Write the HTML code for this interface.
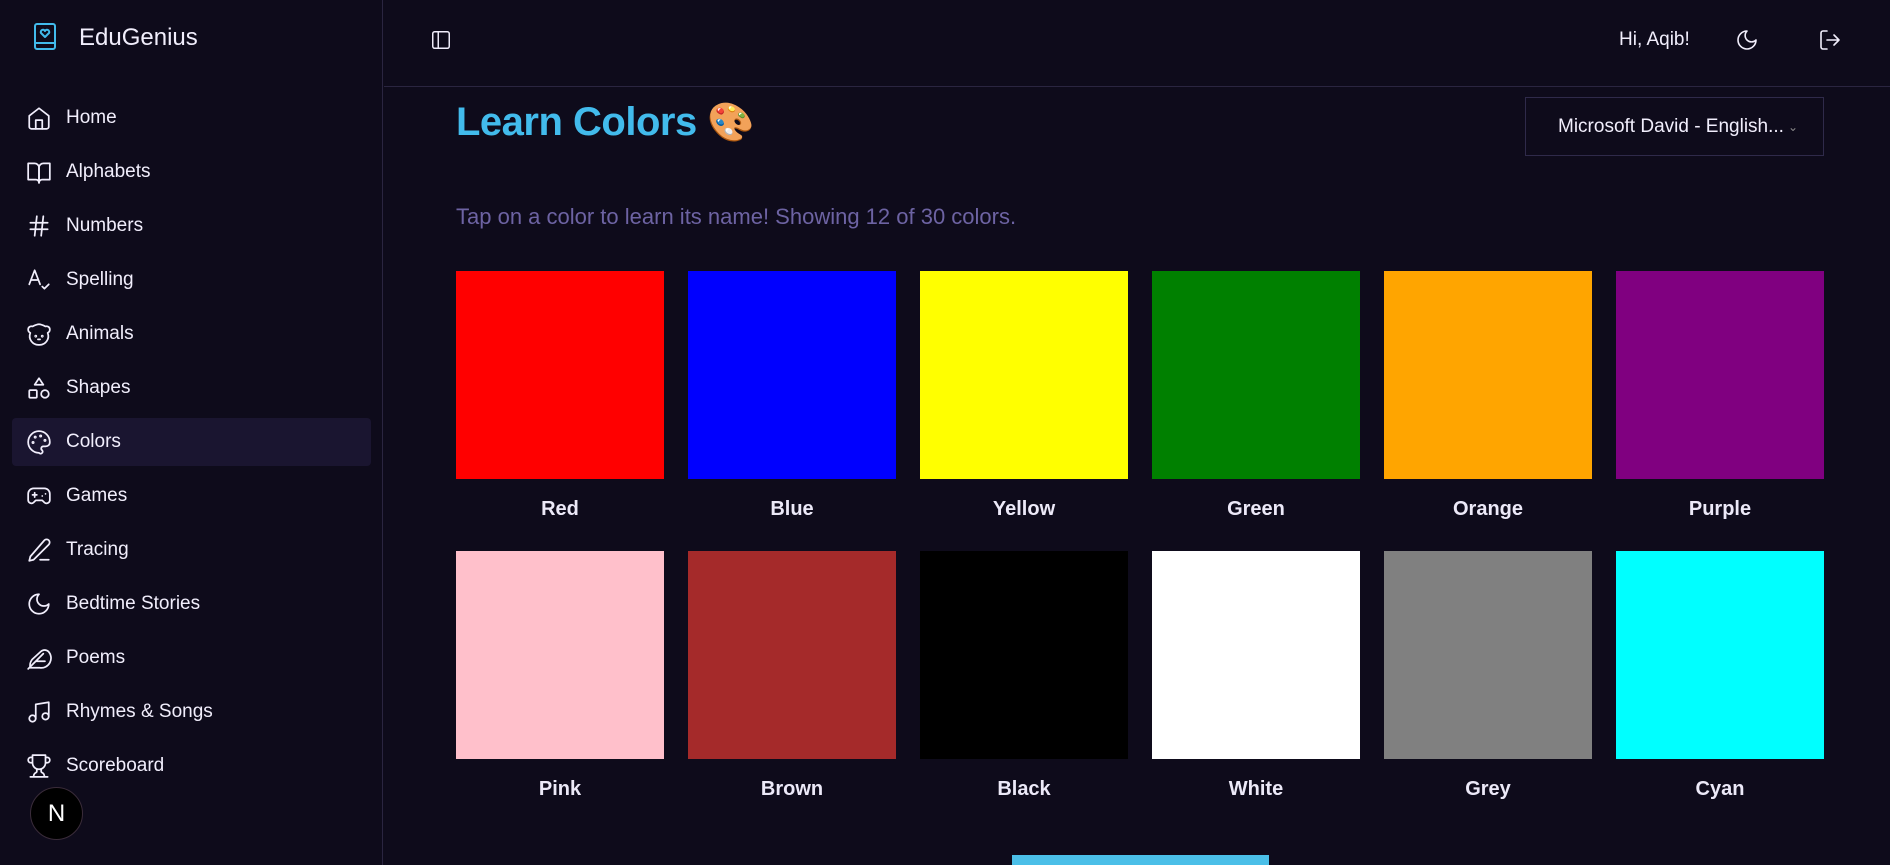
<!DOCTYPE html>
<html><head><meta charset="utf-8"><style>
*{box-sizing:border-box;margin:0;padding:0}
body{width:1890px;height:865px;background:#0e0b1b;font-family:"Liberation Sans",sans-serif;color:#f1eefc;overflow:hidden;position:relative}
.side{position:absolute;left:0;top:0;width:383px;height:865px;border-right:1px solid #2a2540}
.logo{position:absolute;left:34px;top:23px;display:flex;align-items:center}
.logo span{position:absolute;left:45px;top:1px;font-size:24px;white-space:nowrap;line-height:28px}
.nav{position:absolute;left:12px;width:359px;height:48px;display:flex;align-items:center;font-size:19px;border-radius:4px}
.nav svg{position:absolute;left:14px;width:26px;height:26px}
.nav span{position:absolute;left:54px}
.nav.act{background:#1a1530}
svg{fill:none;stroke:#f1eefc;stroke-width:1.6;stroke-linecap:round;stroke-linejoin:round}
.hdr{position:absolute;left:384px;top:0;right:0;height:87px;border-bottom:1px solid #2a2540}
h1{position:absolute;left:456px;top:100px;font-size:40px;color:#42bbec;font-weight:bold;letter-spacing:-0.5px}
.sub{position:absolute;left:456px;top:204px;font-size:22px;color:#6d63a3}
.dd{position:absolute;left:1525px;top:97px;width:299px;height:59px;border:1px solid #2f2a4a;font-size:19px;display:flex;align-items:center;padding-left:32px}
.sw{position:absolute;width:208px;height:208px}
.lb{position:absolute;width:208px;text-align:center;font-size:20px;font-weight:bold;color:#ece9f8}
</style></head><body>
<div class="side">
<div class="logo"><svg width="22" height="27" viewBox="0 0 22 27" style="stroke:#42bbec;stroke-width:2"><rect x="1" y="1" width="20" height="25" rx="2"/><line x1="1" y1="20" x2="21" y2="20"/><path d="M11 14l-4-4a2.2 2.2 0 0 1 4-2 2.2 2.2 0 0 1 4 2z"/></svg><span>EduGenius</span></div>
<div class="nav" style="top:94px"><svg viewBox="0 0 24 24"><path d="M3 10l9-7 9 7v10a2 2 0 0 1-2 2H5a2 2 0 0 1-2-2z"/><path d="M9 22v-8h6v8"/></svg><span>Home</span></div>
<div class="nav" style="top:148px"><svg viewBox="0 0 24 24"><path d="M2 4h6a4 4 0 0 1 4 4v14a3 3 0 0 0-3-3H2z"/><path d="M22 4h-6a4 4 0 0 0-4 4v14a3 3 0 0 1 3-3h7z"/></svg><span>Alphabets</span></div>
<div class="nav" style="top:202px"><svg viewBox="0 0 24 24"><path d="M4 9h16M4 15h16M10 3L8 21M16 3l-2 18"/></svg><span>Numbers</span></div>
<div class="nav" style="top:256px"><svg viewBox="0 0 24 24"><path d="M3 16l5-13 5 13M4.5 12h7M15 18l2 2 4-4"/></svg><span>Spelling</span></div>
<div class="nav" style="top:310px"><svg viewBox="0 0 24 24"><path d="M6 5a3 3 0 0 0-4 3c0 2 2 3 2 3a8 8 0 0 0 8 11 8 8 0 0 0 8-11s2-1 2-3a3 3 0 0 0-4-3C16 4 14 3 12 3S8 4 6 5z"/><circle cx="9" cy="14" r=".5"/><circle cx="15" cy="14" r=".5"/><path d="M11 17h2"/></svg><span>Animals</span></div>
<div class="nav" style="top:364px"><svg viewBox="0 0 24 24"><path d="M12 3l4 6H8z"/><rect x="3" y="14" width="7" height="7" rx="1"/><circle cx="17.5" cy="17.5" r="3.5"/></svg><span>Shapes</span></div>
<div class="nav act" style="top:418px"><svg viewBox="0 0 24 24"><path d="M12 22a10 10 0 1 1 10-10c0 3-2 4-4 4h-2a2 2 0 0 0-1 3.7A1.5 1.5 0 0 1 12 22z"/><circle cx="13.5" cy="6.5" r=".6"/><circle cx="17.5" cy="10.5" r=".6"/><circle cx="8.5" cy="7.5" r=".6"/><circle cx="6.5" cy="12.5" r=".6"/></svg><span>Colors</span></div>
<div class="nav" style="top:472px"><svg viewBox="0 0 24 24"><path d="M6 11h4M8 9v4M15 12h.01M18 10h.01"/><path d="M17 5H7a5 5 0 0 0-5 5v6a3 3 0 0 0 5 2l2-2h6l2 2a3 3 0 0 0 5-2v-6a5 5 0 0 0-5-5z"/></svg><span>Games</span></div>
<div class="nav" style="top:526px"><svg viewBox="0 0 24 24"><path d="M13 21h8"/><path d="M17 3a2.8 2.8 0 0 1 4 4L7 21l-4 1 1-4z"/></svg><span>Tracing</span></div>
<div class="nav" style="top:580px"><svg viewBox="0 0 24 24"><path d="M12 3a6 6 0 0 0 9 9 9 9 0 1 1-9-9z"/></svg><span>Bedtime Stories</span></div>
<div class="nav" style="top:634px"><svg viewBox="0 0 24 24"><path d="M12.7 21a9 9 0 0 0 8-15 5 5 0 0 0-7 0L6 13a9 9 0 0 0-2 8z"/><path d="M16 8L2 22M17.5 15H9"/></svg><span>Poems</span></div>
<div class="nav" style="top:688px"><svg viewBox="0 0 24 24"><path d="M9 18V5l12-2v13"/><circle cx="6" cy="18" r="3"/><circle cx="18" cy="16" r="3"/></svg><span>Rhymes &amp; Songs</span></div>
<div class="nav" style="top:742px"><svg viewBox="0 0 24 24"><path d="M6 9H4.5a2.5 2.5 0 0 1 0-5H6M18 9h1.5a2.5 2.5 0 0 0 0-5H18M4 22h16M10 14.7V17c0 .6-.5 1-1 1.2C7.8 18.8 7 20.2 7 22M14 14.7V17c0 .6.5 1 1 1.2 1.2.5 2 2 2 3.8M18 2H6v7a6 6 0 0 0 12 0z"/></svg><span>Scoreboard</span></div>
<div style="position:absolute;left:30px;top:787px;width:53px;height:53px;border-radius:50%;background:#000;border:1px solid #3a2c3a;color:#fff;font-size:24px;display:flex;align-items:center;justify-content:center">N</div>
</div>
<div class="hdr">
<svg style="position:absolute;left:46px;top:29px" width="22" height="22" viewBox="0 0 24 24"><rect x="3" y="3" width="18" height="18" rx="2"/><path d="M9 3v18"/></svg>
<span style="position:absolute;left:1235px;top:29px;font-size:19px">Hi, Aqib!</span>
<svg style="position:absolute;left:1351px;top:28px" width="24" height="24" viewBox="0 0 24 24"><path d="M12 3a6 6 0 0 0 9 9 9 9 0 1 1-9-9z"/></svg>
<svg style="position:absolute;left:1434px;top:28px" width="24" height="24" viewBox="0 0 24 24"><path d="M9 21H5a2 2 0 0 1-2-2V5a2 2 0 0 1 2-2h4M16 17l5-5-5-5M21 12H9"/></svg>
</div>
<h1>Learn Colors <span style="font-size:38px;font-family:'Noto Color Emoji',sans-serif">🎨</span></h1>
<div class="sub">Tap on a color to learn its name! Showing 12 of 30 colors.</div>
<div class="dd">Microsoft David - English...<span style="font-size:12px;color:#888;margin-left:4px">⌄</span></div>

<div class="sw" style="left:456px;top:271px;background:#f00"></div><div class="lb" style="left:456px;top:498px">Red</div>
<div class="sw" style="left:688px;top:271px;background:#00f"></div><div class="lb" style="left:688px;top:498px">Blue</div>
<div class="sw" style="left:920px;top:271px;background:#ff0"></div><div class="lb" style="left:920px;top:498px">Yellow</div>
<div class="sw" style="left:1152px;top:271px;background:#008000"></div><div class="lb" style="left:1152px;top:498px">Green</div>
<div class="sw" style="left:1384px;top:271px;background:#ffa500"></div><div class="lb" style="left:1384px;top:498px">Orange</div>
<div class="sw" style="left:1616px;top:271px;background:#800080"></div><div class="lb" style="left:1616px;top:498px">Purple</div>
<div class="sw" style="left:456px;top:551px;background:#ffc0cb"></div><div class="lb" style="left:456px;top:778px">Pink</div>
<div class="sw" style="left:688px;top:551px;background:#a52a2a"></div><div class="lb" style="left:688px;top:778px">Brown</div>
<div class="sw" style="left:920px;top:551px;background:#000"></div><div class="lb" style="left:920px;top:778px">Black</div>
<div class="sw" style="left:1152px;top:551px;background:#fff"></div><div class="lb" style="left:1152px;top:778px">White</div>
<div class="sw" style="left:1384px;top:551px;background:#808080"></div><div class="lb" style="left:1384px;top:778px">Grey</div>
<div class="sw" style="left:1616px;top:551px;background:#0ff"></div><div class="lb" style="left:1616px;top:778px">Cyan</div>
<div style="position:absolute;left:1012px;top:855px;width:257px;height:10px;background:#4bbfe8"></div>
</body></html>
